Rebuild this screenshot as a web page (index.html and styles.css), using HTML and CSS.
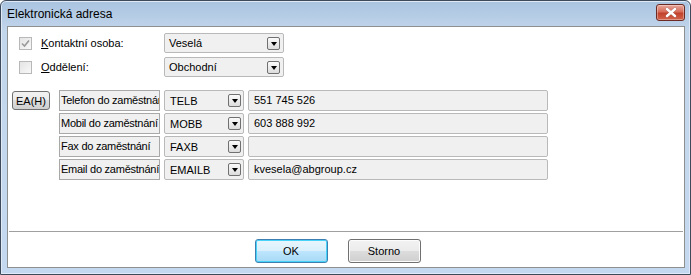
FILE: index.html
```html
<!DOCTYPE html>
<html lang="cs">
<head>
<meta charset="utf-8">
<title>Elektronická adresa</title>
<link rel="stylesheet" href="styles.css">
</head>
<body>
<div class="window">
  <div class="titlebar">
    <span class="title">Elektronická adresa</span>
    <span class="close">
      <svg width="16" height="11" viewBox="0 0 16 11"><path d="M4 2 L12 9 M12 2 L4 9" fill="none" stroke="#fff" stroke-width="2.6" stroke-linecap="round"/></svg>
    </span>
  </div>
  <div class="client">
    <div class="top">
      <div class="frow">
        <span class="chk checked disabled"><svg width="9" height="9" viewBox="0 0 9 9"><path d="M1 4.5 L3.5 7 L8 1.5" fill="none" stroke="#9a9a9a" stroke-width="1.6"/></svg></span>
        <span class="flabel"><u>K</u>ontaktní osoba:</span>
        <span class="combo wide"><span class="ctext">Veselá</span><span class="dd"><i></i></span></span>
      </div>
      <div class="frow">
        <span class="chk"></span>
        <span class="flabel"><u>O</u>ddělení:</span>
        <span class="combo wide"><span class="ctext">Obchodní</span><span class="dd"><i></i></span></span>
      </div>
    </div>
    <div class="grid">
      <div class="eacol"><button class="ea">EA(H)</button></div>
      <div class="rows">
        <div class="row">
          <span class="lbox">Telefon do zaměstnání</span>
          <span class="combo code"><span class="ctext">TELB</span><span class="dd"><i></i></span></span>
          <span class="val">551 745 526</span>
        </div>
        <div class="row">
          <span class="lbox">Mobil do zaměstnání</span>
          <span class="combo code"><span class="ctext">MOBB</span><span class="dd"><i></i></span></span>
          <span class="val">603 888 992</span>
        </div>
        <div class="row">
          <span class="lbox">Fax do zaměstnání</span>
          <span class="combo code"><span class="ctext">FAXB</span><span class="dd"><i></i></span></span>
          <span class="val"></span>
        </div>
        <div class="row">
          <span class="lbox">Email do zaměstnání</span>
          <span class="combo code"><span class="ctext">EMAILB</span><span class="dd"><i></i></span></span>
          <span class="val">kvesela@abgroup.cz</span>
        </div>
      </div>
    </div>
    <div class="spacer"></div>
    <div class="sep"></div>
    <div class="buttons">
      <button class="btn default">OK</button>
      <button class="btn">Storno</button>
    </div>
  </div>
</div>
</body>
</html>
```
FILE: styles.css
```css
* { box-sizing: border-box; }
html, body { margin: 0; padding: 0; background: #fff; }
body { font-family: "Liberation Sans", Arial, sans-serif; font-size: 11px; color: #000; }

.window {
  width: 691px; height: 275px;
  border: 1px solid #3c4a5c;
  border-radius: 6px 6px 0 0;
  background: linear-gradient(to bottom, #a9c3df 0, #c2d6ec 30px, #c4d9ef 100%);
  display: flex; flex-direction: column;
  box-shadow: inset 0 0 0 1px #dfeaf6;
  overflow: hidden;
}
.titlebar {
  height: 25px; flex: none;
  display: flex; align-items: center; justify-content: space-between;
  padding: 0 5px 0 6px;
}
.title { font-family: "Liberation Sans", Arial, sans-serif; font-size: 12px; color: #000; padding-top: 1px; }
.close {
  width: 29px; height: 17px; margin-top: -2px;
  border: 1px solid #6b2a22; border-radius: 3px;
  background: linear-gradient(to bottom, #e8a89b 0, #d66c5a 45%, #c1422c 55%, #d2634c 100%);
  display: flex; align-items: center; justify-content: center;
  box-shadow: inset 0 0 0 1px rgba(255,255,255,.35);
}
.close svg { filter: drop-shadow(0 0 0.6px #5a1a10); }

.client {
  margin: 0 5px 6px 6px;
  flex: 1;
  background: #fff;
  border: 1px solid #8e8f8f;
  display: flex; flex-direction: column;
}
.top { padding: 6px 0 0 11px; display: flex; flex-direction: column; gap: 4px; }
.frow { display: flex; align-items: center; height: 20px; }
.chk {
  width: 13px; height: 13px; border: 1px solid #b8b8b8;
  background: linear-gradient(135deg, #e4e4e4, #f8f8f8);
  display: flex; align-items: center; justify-content: center;
  margin-right: 9px;
}
.flabel { width: 123px; color: #000; }
.flabel u { text-decoration: underline; }

.combo {
  display: flex; align-items: center; justify-content: space-between;
  height: 20px; border: 1px solid #b9b9b9; border-radius: 2px;
  background: #f0f0f0; padding: 0 3px 0 4px;
}
.combo.wide { width: 120px; }
.dd {
  width: 13px; height: 13px; border: 1px solid #707070; border-radius: 2px;
  background: linear-gradient(to bottom, #fafafa, #dcdcdc);
  display: flex; align-items: center; justify-content: center;
  flex: none;
}
.dd i {
  display: block; width: 0; height: 0;
  border-left: 3.5px solid transparent; border-right: 3.5px solid transparent;
  border-top: 4px solid #000; margin-top: 1px;
}

.grid { display: flex; margin-top: 13px; padding-left: 4px; }
.eacol { width: 47px; padding-top: 1px; }
.ea {
  width: 38px; height: 19px; padding: 0;
  font: inherit; color: #000;
  border: 1px solid #707070; border-radius: 3px;
  background: linear-gradient(to bottom, #f2f2f2 0, #ebebeb 50%, #dddddd 50%, #cfcfcf 100%);
}
.rows { display: flex; flex-direction: column; gap: 2px; }
.row { display: flex; gap: 4px; height: 21px; }
.lbox {
  width: 101px; height: 21px; border: 1px solid #a8a8a8; background: #f0f0f0;
  padding: 0 1px; line-height: 19px; white-space: nowrap; overflow: hidden;
  letter-spacing: -0.25px;
}
.combo.code { width: 80px; height: 21px; padding: 0 2px 0 5px; }
.val {
  width: 300px; height: 21px; border: 1px solid #b9b9b9; border-radius: 2px;
  background: #f0f0f0; padding: 0 5px; line-height: 19px;
}

.spacer { flex: 1; }
.sep { margin: 0 1px; height: 1px; border-top: 1px solid #a0a0a0; }
.buttons { display: flex; justify-content: center; gap: 20px; padding: 7px 17px 4px 0; }
.btn {
  width: 73px; height: 24px; padding: 0;
  font: inherit; color: #000;
  border: 1px solid #707070; border-radius: 3px;
  background: linear-gradient(to bottom, #f2f2f2 0, #ebebeb 50%, #dddddd 50%, #cfcfcf 100%);
  box-shadow: inset 0 0 0 1px #fcfcfc;
}
.btn.default {
  border-color: #3c7fb1;
  background: linear-gradient(to bottom, #eaf6fd 0, #d9f0fc 50%, #bee6fd 50%, #a7d9f5 100%);
  box-shadow: inset 0 0 0 1px #48d3f9;
}
```
